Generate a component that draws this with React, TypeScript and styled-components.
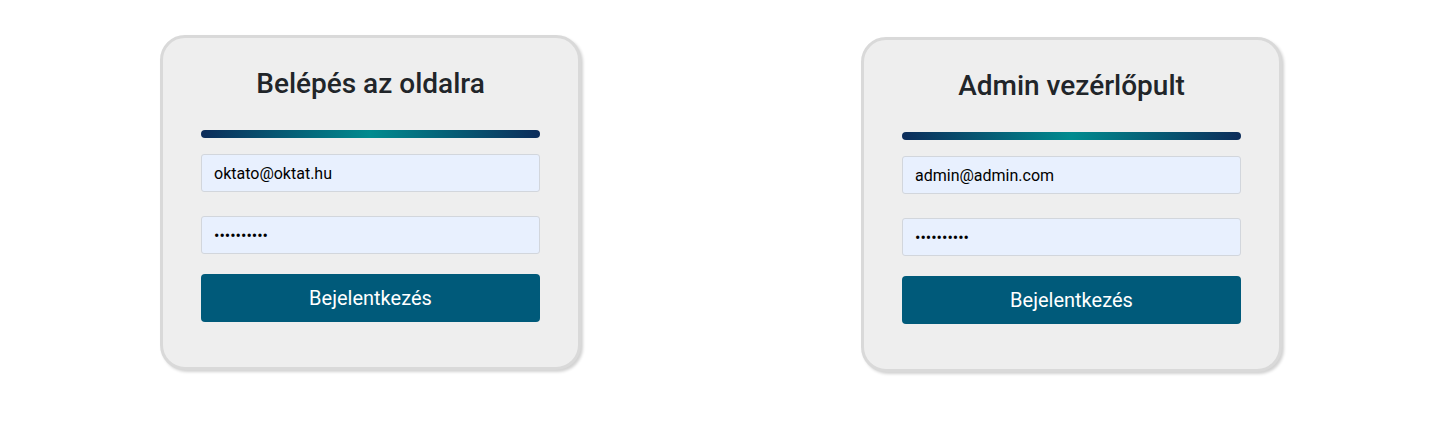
import React from "react";
import styled, { createGlobalStyle } from "styled-components";

const Global = createGlobalStyle`
  html, body { margin: 0; padding: 0; background: #ffffff; }
  body { font-family: Roboto, "Liberation Sans", Arial, sans-serif; }
  * { box-sizing: border-box; }
`;

const Page = styled.div`
  display: flex;
  align-items: flex-start;
  gap: 280px;
  padding: 35px 0 0 160px;
  width: 1430px;
  height: 422px;
`;

const Card = styled.div<{ $shift?: number }>`
  width: 421px;
  margin-top: ${(p) => p.$shift ?? 0}px;
  padding: 29px 38px 45px 38px;
  background: #eeeeee;
  border: 3px solid #d9d9d9;
  border-radius: 25px;
  box-shadow: 2px 2px 3px rgba(0, 0, 0, 0.18);
  display: flex;
  flex-direction: column;
`;

const Title = styled.h2`
  margin: 0 0 30px;
  font-size: 28px;
  line-height: 33px;
  font-weight: 500;
  color: #212529;
  text-align: center;
`;

const Bar = styled.div`
  height: 8px;
  border-radius: 4px;
  background: linear-gradient(90deg, #0c2c5a 0%, #008b8f 50%, #0c2c5a 100%);
  margin-bottom: 16px;
`;

const Input = styled.input<{ $gap: number }>`
  display: block;
  width: 100%;
  height: 38px;
  margin: 0 0 ${(p) => p.$gap}px;
  padding: 0 12px;
  background: #e8f0fe;
  border: 1px solid #d2d6dc;
  border-radius: 3px;
  font-family: Roboto, "Liberation Sans", Arial, sans-serif;
  font-size: 16px;
  color: #000000;
  outline: none;
`;

const Button = styled.button`
  display: block;
  width: 100%;
  height: 48px;
  border: none;
  border-radius: 4px;
  background: #005a7a;
  color: #ffffff;
  font-family: Roboto, "Liberation Sans", Arial, sans-serif;
  font-size: 20px;
  cursor: pointer;
`;

const LoginCard: React.FC<{ title: string; email: string; shift?: number }> = ({
  title,
  email,
  shift,
}) => (
  <Card $shift={shift}>
    <Title>{title}</Title>
    <Bar />
    <Input $gap={24} type="email" defaultValue={email} />
    <Input $gap={20} type="password" defaultValue="**********" />
    <Button>Bejelentkezés</Button>
  </Card>
);

export default function App() {
  return (
    <>
      <Global />
      <Page>
        <LoginCard title="Belépés az oldalra" email="oktato@oktat.hu" />
        <LoginCard title="Admin vezérlőpult" email="admin@admin.com" shift={2} />
      </Page>
    </>
  );
}
